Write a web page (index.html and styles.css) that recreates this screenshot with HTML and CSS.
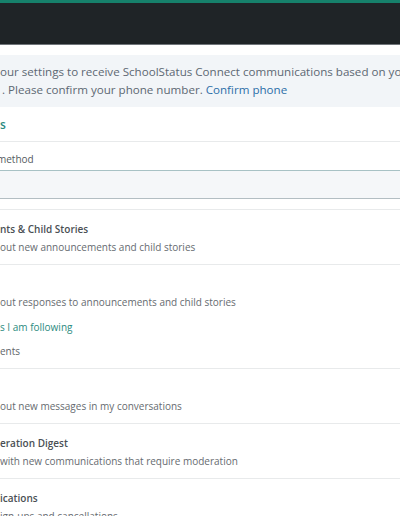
FILE: index.html
```html
<!DOCTYPE html>
<html>
<head>
<meta charset="utf-8">
<link rel="stylesheet" href="styles.css">
</head>
<body>
<header class="topbar"></header>
<main class="page">
  <div class="alert">
    <div class="alert-line">our settings to receive SchoolStatus Connect communications based on your role</div>
    <div class="alert-line second">. Please confirm your phone number. <a class="alert-link" href="#">Confirm phone</a></div>
  </div>
  <section class="card">
    <div class="card-head">s</div>
    <div class="method">
      <div class="method-label"><span class="cut">method</span></div>
      <div class="method-input"></div>
    </div>
    <ul class="list">
      <li class="item">
        <div class="title">nts &amp; Child Stories</div>
        <div class="sub">out new announcements and child stories</div>
      </li>
      <li class="item">
        <div class="title">&nbsp;</div>
        <div class="sub">out responses to announcements and child stories</div>
        <div class="option link">s I am following</div>
        <div class="option">ents</div>
      </li>
      <li class="item">
        <div class="title">&nbsp;</div>
        <div class="sub">out new messages in my conversations</div>
      </li>
      <li class="item">
        <div class="title">eration Digest</div>
        <div class="sub">with new communications that require moderation</div>
      </li>
      <li class="item">
        <div class="title">ications</div>
        <div class="sub">ign-ups and cancellations</div>
      </li>
    </ul>
  </section>
</main>
</body>
</html>
```

FILE: styles.css
```css
html, body {
  margin: 0;
  padding: 0;
  background: #ffffff;
  overflow: hidden;
}
body {
  font-family: "Open Sans", "DejaVu Sans", sans-serif;
  width: 400px;
  height: 516px;
}
.topbar {
  height: 41px;
  border-top: 3px solid #16816b;
  border-bottom: 1px solid #70757a;
  background: #1f2427;
}
.page {
  padding-top: 10px;
}
.alert {
  background: #f2f5f8;
  padding: 8px 0;
  color: #5d6873;
  font-size: 11.6px;
  line-height: 18px;
  white-space: nowrap;
}
.alert-line.second {
  padding-left: 2px;
}
.alert-link {
  color: #2d6fa8;
  text-decoration: none;
}
.card-head {
  padding: 8px 0 6px;
  line-height: 20px;
  font-size: 12px;
  font-weight: 600;
  color: #2b8b80;
  border-bottom: 1px solid #e8eaeb;
}
.method {
  padding: 8px 0 10px;
}
.method-label {
  font-size: 10px;
  line-height: 18px;
  color: #555b60;
  overflow: hidden;
}
.cut {
  display: inline-block;
  margin-left: -3px;
}
.method-input {
  margin-top: 2px;
  height: 27px;
  background: #f5f7f9;
  border-top: 1px solid #a8c2c5;
  border-bottom: 1px solid #b3bec3;
}
.list {
  list-style: none;
  margin: 0;
  padding: 0;
  border-top: 1px solid #e8eaeb;
}
.item {
  padding: 10px 0 8px;
  border-bottom: 1px solid #e8eaeb;
  font-size: 10px;
  line-height: 18px;
  white-space: nowrap;
}
.title {
  font-weight: 600;
  color: #4a4f54;
}
.sub {
  color: #666b70;
}
.option {
  margin-top: 6px;
  color: #60656a;
}
.option.link {
  margin-top: 7px;
  color: #2b8b80;
}
```
